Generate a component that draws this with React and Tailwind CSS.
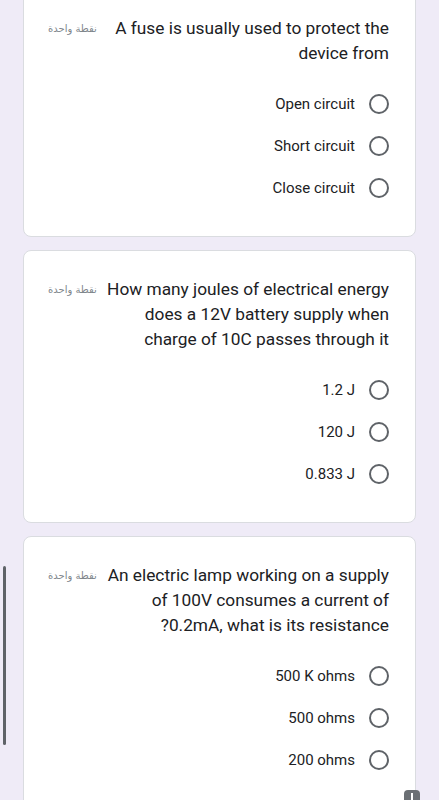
import React from "react";

const questions = [
    {
        id: 1,
        text: "A fuse is usually used to protect the device from",
        options: ["Open circuit", "Short circuit", "Close circuit"],
    },
    {
        id: 2,
        text: "How many joules of electrical energy does a 12V battery supply when charge of 10C passes through it",
        options: ["1.2 J", "120 J", "0.833 J"],
    },
    {
        id: 3,
        text: "An electric lamp working on a supply of 100V consumes a current of 0.2mA, what is its resistance?",
        options: ["500 K ohms", "500 ohms", "200 ohms"],
    },
];

function QuestionCard({ q, first }) {
    return (
        <div
            dir="rtl"
            className={`rounded-lg border border-[#dadce0] bg-white pt-[26px] pb-[27px] pr-[26px] pl-[24px] ${first ? "-mt-[11px]" : ""}`}
        >
            {/* Question + points */}
            <div className="flex items-start justify-between">
                <p className="w-[288px] text-[17.3px] leading-[25px] text-[#202124] font-['Roboto',sans-serif]">
                    {q.text}
                </p>
                <span className="shrink-0 text-[10px] leading-[25px] text-[#80868b] font-['DejaVu_Sans',sans-serif]">
                    نقطة واحدة
                </span>
            </div>

            {/* Options */}
            <div className="mt-[17px] flex flex-col">
                {q.options.map((opt) => (
                    <label key={opt} className="flex h-[42px] items-center gap-[14px]">
                        <span className="h-5 w-5 shrink-0 rounded-full border-2 border-[#5f6368]" />
                        <span dir="ltr" className="text-[15px] text-[#202124] font-['Roboto',sans-serif]">
                            {opt}
                        </span>
                    </label>
                ))}
            </div>
        </div>
    );
}

export default function App() {
    return (
        <main className="relative h-[800px] overflow-hidden bg-[#efebf7]">
            <div className="flex flex-col gap-[13px] px-[23px]">
                {questions.map((q, i) => (
                    <QuestionCard key={q.id} q={q} first={i === 0} />
                ))}
            </div>

            {/* scroll indicator */}
            <div className="absolute left-[3px] top-[566px] h-[179px] w-[3px] rounded-full bg-[#5f6368]" />

            {/* corner button */}
            <div className="absolute left-[404px] top-[790px] flex h-[14px] w-[16px] justify-center rounded-sm bg-[#6b6f74] pt-[3px]">
                <span className="h-[8px] w-[2px] bg-white" />
            </div>
        </main>
    );
}
